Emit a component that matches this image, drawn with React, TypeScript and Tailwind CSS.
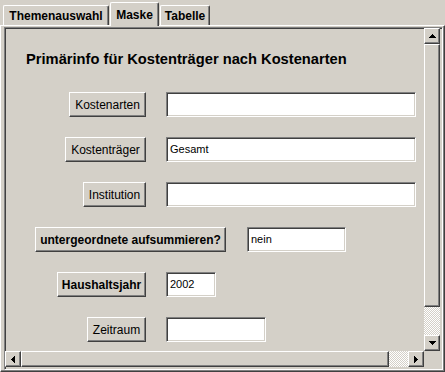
import React from "react";

const raised =
  "border border-t-white border-l-white border-b-[#404040] border-r-[#404040] shadow-[inset_-1px_-1px_0_#808080]";
const sunken =
  "border border-t-[#808080] border-l-[#808080] border-b-white border-r-white shadow-[inset_1px_1px_0_#404040,inset_-1px_-1px_0_#d4d0c8]";
const checker =
  "bg-[image:repeating-conic-gradient(#ffffff_0_25%,#d4d0c8_0_50%)] bg-[length:2px_2px]";

function Arrow({ dir }: { dir: "up" | "down" | "left" | "right" }) {
  const rows = [
    [3, 1],
    [2, 3],
    [1, 5],
    [0, 7],
  ];
  if (dir === "up" || dir === "down") {
    return (
      <svg width="7" height="4" viewBox="0 0 7 4" shapeRendering="crispEdges">
        {rows.map(([x, w], i) => (
          <rect key={i} x={x} y={dir === "up" ? i : 3 - i} width={w} height={1} fill="#000" />
        ))}
      </svg>
    );
  }
  return (
    <svg width="4" height="7" viewBox="0 0 4 7" shapeRendering="crispEdges">
      {rows.map(([y, h], i) => (
        <rect key={i} y={y} x={dir === "left" ? i : 3 - i} height={h} width={1} fill="#000" />
      ))}
    </svg>
  );
}

function ScrollBtn({ dir }: { dir: "up" | "down" | "left" | "right" }) {
  return (
    <div className={`w-[16px] h-[16px] shrink-0 flex items-center justify-center bg-[#d4d0c8] ${raised}`}>
      <Arrow dir={dir} />
    </div>
  );
}

function Btn({ label, w, bold }: { label: string; w: string; bold?: boolean }) {
  return (
    <div
      className={`${w} h-[25px] shrink-0 flex items-center justify-center bg-[#d4d0c8] text-[12px] text-black ${
        bold ? "font-bold" : ""
      } ${raised}`}
    >
      {label}
    </div>
  );
}

function Field({ value, w }: { value?: string; w: string }) {
  return (
    <div className={`${w} h-[25px] shrink-0 flex items-center bg-white pl-[3px] text-[11px] text-black ${sunken}`}>
      {value}
    </div>
  );
}

function Tab({ label, w, selected, ml }: { label: string; w: string; selected?: boolean; ml: string }) {
  return (
    <div
      className={`${w} ${ml} ${
        selected ? "h-[24px] -mb-[1px] relative z-10" : "h-[20px]"
      } flex items-center justify-center bg-[#d4d0c8] border-l border-t border-r border-l-white border-t-white border-r-[#404040] rounded-t-[2px] shadow-[inset_-1px_0_0_#808080] text-[12px] font-bold text-black`}
    >
      {label}
    </div>
  );
}

export default function App() {
  return (
    <div className="w-[445px] h-[372px] bg-[#d4d0c8] flex flex-col overflow-hidden font-['Liberation_Sans',Arial,sans-serif] text-black">
      <div className="h-[25px] flex items-end shrink-0">
        <Tab label="Themenauswahl" w="w-[106px]" ml="ml-[3px]" />
        <Tab label="Maske" w="w-[49px]" ml="ml-[1px]" selected />
        <Tab label="Tabelle" w="w-[50px]" ml="ml-[1px]" />
      </div>
      <div className="h-[347px] border border-l-white border-t-white border-r-[#404040] border-b-[#404040] flex flex-col">
        <div className="flex-1 border-r border-b border-r-[#808080] border-b-[#808080] pl-[3px] pt-[1px] flex flex-col">
          <div className={`w-[439px] h-[343px] flex flex-col ${sunken}`}>
            <div className="flex h-[323px]">
              <div className="w-[419px] h-[323px] flex flex-col">
                <div className="pl-[21px] pt-[23px] h-[40px] text-[14.7px] leading-[17px] font-bold">
                  Primärinfo für Kostenträger nach Kostenarten
                </div>
                <div className="flex flex-col gap-[20px] mt-[24px]">
                  <div className="flex items-start gap-[20px]">
                    <div className="w-[141px] flex justify-end">
                      <Btn label="Kostenarten" w="w-[77px]" />
                    </div>
                    <Field w="w-[250px]" />
                  </div>
                  <div className="flex items-start gap-[20px]">
                    <div className="w-[141px] flex justify-end">
                      <Btn label="Kostenträger" w="w-[81px]" />
                    </div>
                    <Field w="w-[250px]" value="Gesamt" />
                  </div>
                  <div className="flex items-start gap-[20px]">
                    <div className="w-[141px] flex justify-end">
                      <Btn label="Institution" w="w-[63px]" />
                    </div>
                    <Field w="w-[250px]" />
                  </div>
                  <div className="flex items-start gap-[21px] pl-[30px]">
                    <Btn label="untergeordnete aufsummieren?" w="w-[191px]" bold />
                    <Field w="w-[99px]" value="nein" />
                  </div>
                  <div className="flex items-start gap-[20px]">
                    <div className="w-[141px] flex justify-end">
                      <Btn label="Haushaltsjahr" w="w-[89px]" bold />
                    </div>
                    <Field w="w-[50px]" value="2002" />
                  </div>
                  <div className="flex items-start gap-[20px]">
                    <div className="w-[141px] flex justify-end">
                      <Btn label="Zeitraum" w="w-[59px]" />
                    </div>
                    <Field w="w-[100px]" />
                  </div>
                </div>
              </div>
              <div className="w-[16px] h-[323px] flex flex-col">
                <ScrollBtn dir="up" />
                <div className={`h-[263px] bg-[#d4d0c8] ${raised}`} />
                <div className={`h-[28px] ${checker}`} />
                <ScrollBtn dir="down" />
              </div>
            </div>
            <div className="flex h-[16px]">
              <ScrollBtn dir="left" />
              <div className={`w-[368px] h-[16px] bg-[#d4d0c8] ${raised}`} />
              <div className={`w-[19px] h-[16px] ${checker}`} />
              <ScrollBtn dir="right" />
              <div className="w-[16px] h-[16px] bg-[#d4d0c8]" />
            </div>
          </div>
        </div>
      </div>
    </div>
  );
}
